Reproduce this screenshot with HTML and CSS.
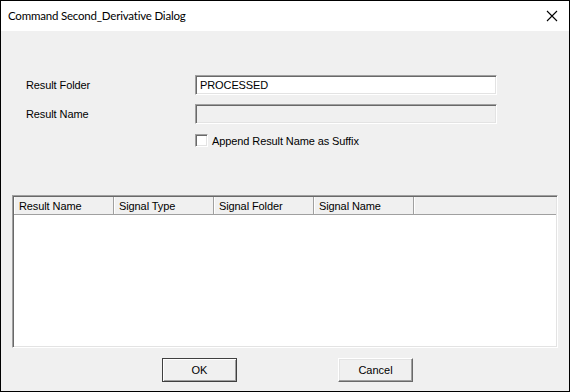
FILE: index.html
```html
<!DOCTYPE html>
<html lang="en">
<head>
  <meta charset="UTF-8">
  <title>Command Second_Derivative Dialog</title>
  <link rel="stylesheet" href="styles.css">
</head>
<body>

<div class="dialog">
  <div class="title-bar">
    <span class="title">Command Second_Derivative Dialog</span>
    <svg class="close" width="12" height="12" viewBox="0 0 12 12">
      <path d="M1 1 L11 11 M11 1 L1 11" stroke="#000" stroke-width="1.1" fill="none"/>
    </svg>
  </div>

  <div class="content">
    <div class="form">
      <div class="row">
        <label class="label">Result Folder</label>
        <div class="field">PROCESSED</div>
      </div>
      <div class="row">
        <label class="label">Result Name</label>
        <div class="field disabled"></div>
      </div>
      <div class="row check-row">
        <span class="checkbox"></span>
        <span class="check-text">Append Result Name as Suffix</span>
      </div>
    </div>

    <div class="list">
      <div class="list-header">
        <div class="col">Result Name</div>
        <div class="col">Signal Type</div>
        <div class="col">Signal Folder</div>
        <div class="col">Signal Name</div>
        <div class="col-rest"></div>
      </div>
      <div class="list-body"></div>
    </div>

    <div class="buttons">
      <button class="btn default">OK</button>
      <button class="btn">Cancel</button>
    </div>
  </div>
</div>

</body>
</html>
```

FILE: styles.css
```css
* {
  box-sizing: border-box;
}
body {
  margin: 0;
  background: #fff;
  font-family: "Liberation Sans", Arial, sans-serif;
  font-size: 11px;
  letter-spacing: -0.1px;
  color: #000;
}
.dialog {
  width: 570px;
  height: 392px;
  border: 1px solid #000;
  display: flex;
  flex-direction: column;
}
.title-bar {
  height: 30px;
  background: #fff;
  display: flex;
  align-items: center;
  justify-content: space-between;
  padding: 0 11px 0 7px;
}
.title {
  font-family: Lato, sans-serif;
  font-size: 11.5px;
  letter-spacing: -0.2px;
  padding-bottom: 1px;
}
.close {
  display: block;
}
.content {
  flex: 1;
  background: #f0f0f0;
  display: flex;
  flex-direction: column;
  padding: 44px 10px 0 11px;
}
.form {
  display: flex;
  flex-direction: column;
  gap: 9px;
}
.row {
  display: flex;
  align-items: center;
}
.label {
  width: 183px;
  padding-left: 14px;
}
.field {
  width: 302px;
  height: 20px;
  background: #fff;
  border-top: 1px solid #a0a0a0;
  border-left: 1px solid #a0a0a0;
  border-right: 1px solid #fff;
  border-bottom: 1px solid #fff;
  box-shadow: inset 1px 1px 0 #696969, inset -1px -1px 0 #e3e3e3;
  padding: 2px 4px 0;
  line-height: 15px;
}
.field.disabled {
  background: #f0f0f0;
}
.check-row {
  padding-left: 183px;
  margin-top: 1px;
}
.checkbox {
  width: 13px;
  height: 13px;
  background: #fff;
  border: 1px solid #a0a0a0;
  border-right-color: #fff;
  border-bottom-color: #fff;
  box-shadow: inset 1px 1px 0 #696969, inset -1px -1px 0 #e3e3e3;
}
.check-text {
  margin-left: 4px;
}
.list {
  margin-top: 48px;
  width: 546px;
  height: 153px;
  background: #fff;
  border-top: 1px solid #a0a0a0;
  border-left: 1px solid #a0a0a0;
  border-right: 1px solid #fff;
  border-bottom: 1px solid #fff;
  box-shadow: inset 1px 1px 0 #696969, inset -1px -1px 0 #e3e3e3;
  padding: 1px;
  display: flex;
  flex-direction: column;
}
.list-header {
  display: flex;
  height: 18px;
  background: #f0f0f0;
  border-bottom: 1px solid #a0a0a0;
}
.col {
  width: 100px;
  padding: 3px 0 0 4px;
  border-left: 1px solid #fff;
  border-right: 1px solid #a0a0a0;
  white-space: nowrap;
}
.col-rest {
  flex: 1;
  border-left: 1px solid #fff;
}
.list-body {
  flex: 1;
}
.buttons {
  display: flex;
  padding-left: 150px;
  gap: 101px;
  margin-top: 10px;
}
.btn {
  width: 75px;
  height: 24px;
  font-family: "Liberation Sans", Arial, sans-serif;
  font-size: 11px;
  color: #000;
  background: #f0f0f0;
  border: 1px solid #fff;
  border-right-color: #696969;
  border-bottom-color: #696969;
  box-shadow: inset -1px -1px 0 #a0a0a0, inset 1px 1px 0 #e3e3e3;
  padding: 0;
}
.btn.default {
  outline: 1px solid #404040;
  outline-offset: -1px;
  border-top-color: #404040;
  border-left-color: #404040;
  box-shadow: inset 1px 1px 0 #fff, inset -1px -1px 0 #a0a0a0;
}
```
